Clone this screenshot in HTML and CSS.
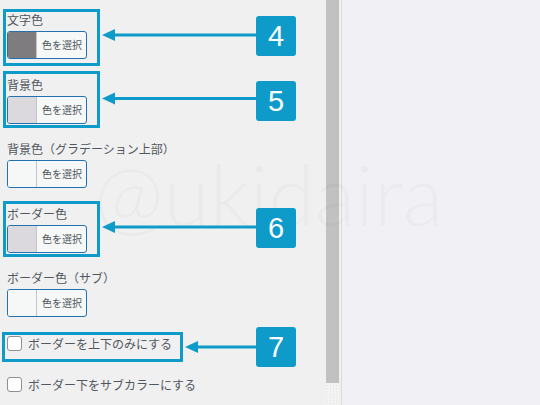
FILE: index.html
```html
<!DOCTYPE html>
<html lang="ja">
<head>
    <meta charset="UTF-8">
    <meta name="viewport" content="width=device-width, initial-scale=1.0">
    <title>ボタン設定</title>
    <link rel="stylesheet" href="styles.css">
</head>
<body>
    <div class="screen">
        <div class="panel">
            <div class="field">
                <div class="field-label">文字色</div>
                <button class="color-btn"><span class="swatch swatch-grey"></span><span class="btn-text">色を選択</span></button>
            </div>
            <div class="field">
                <div class="field-label">背景色</div>
                <button class="color-btn"><span class="swatch swatch-mauve"></span><span class="btn-text">色を選択</span></button>
            </div>
            <div class="field">
                <div class="field-label">背景色（グラデーション上部）</div>
                <button class="color-btn"><span class="swatch"></span><span class="btn-text">色を選択</span></button>
            </div>
            <div class="field">
                <div class="field-label">ボーダー色</div>
                <button class="color-btn"><span class="swatch swatch-mauve"></span><span class="btn-text">色を選択</span></button>
            </div>
            <div class="field">
                <div class="field-label">ボーダー色（サブ）</div>
                <button class="color-btn"><span class="swatch"></span><span class="btn-text">色を選択</span></button>
            </div>

            <div class="check-list">
                <label class="check-row"><span class="check"></span>ボーダーを上下のみにする</label>
                <label class="check-row"><span class="check"></span>ボーダー下をサブカラーにする</label>
            </div>
        </div>

        <div class="scrollbar"><div class="thumb"></div></div>
        <div class="gutter"></div>
        <div class="preview"></div>

        <div class="watermark">@ukidaira</div>

        <!-- рамки и стрелки поверх панели -->
        <svg class="marks" width="540" height="405" viewBox="0 0 540 405">
            <g fill="none" stroke="#0e9bca" stroke-width="3">
                <rect x="4.5" y="10.5" width="94" height="54"/>
                <rect x="4.5" y="72.5" width="94" height="54"/>
                <rect x="4.5" y="202.5" width="94" height="53"/>
                <rect x="3.5" y="333.5" width="178" height="27"/>
                <line x1="112" y1="35" x2="257" y2="35"/>
                <line x1="112" y1="98.5" x2="257" y2="98.5"/>
                <line x1="112" y1="227" x2="257" y2="227"/>
                <line x1="195" y1="347" x2="257" y2="347"/>
            </g>
            <g fill="#0e9bca">
                <polygon points="102,35 115,29 115,41"/>
                <polygon points="102,98.5 115,92.5 115,104.5"/>
                <polygon points="102,227 115,221 115,233"/>
                <polygon points="185,347 198,341 198,353"/>
            </g>
        </svg>

        <div class="badge badge-4">4</div>
        <div class="badge badge-5">5</div>
        <div class="badge badge-6">6</div>
        <div class="badge badge-7">7</div>
    </div>
</body>
</html>
```

FILE: styles.css
```css
body {
    margin: 0;
    font-family: "Noto Sans CJK JP", "Liberation Sans", sans-serif;
    color: #50575e;
}
.screen {
    position: relative;
    width: 540px;
    height: 405px;
    overflow: hidden;
    display: flex;
}

/* левая панель с настройками */
.panel {
    width: 326px;
    flex-shrink: 0;
    background-color: #f0f0f1;
    padding: 11px 0 0 7px;
    box-sizing: border-box;
}
.field {
    margin-bottom: 16.5px;
}
.field-label {
    font-size: 12px;
    line-height: 18px;
    margin-bottom: 2px;
    white-space: nowrap;
}
.color-btn {
    display: flex;
    align-items: stretch;
    width: 80px;
    height: 28px;
    padding: 0;
    border: 1px solid #2271b1;
    border-radius: 3px;
    background-color: #f6f7f7;
    overflow: hidden;
    font-family: inherit;
    cursor: pointer;
}
.swatch {
    width: 28px;
    flex-shrink: 0;
    border-right: 1px solid #c3c4c7;
    background-color: #f6f7f7;
}
.swatch-grey {
    background-color: #7f7c7f;
}
.swatch-mauve {
    background-color: #dcd9de;
}
.btn-text {
    font-size: 10px;
    line-height: 26px;
    color: #50575e;
    padding-left: 5px;
    white-space: nowrap;
}

.check-list {
    margin-top: 3px;
    display: flex;
    flex-direction: column;
    gap: 21px;
}
.check-row {
    display: flex;
    align-items: center;
    height: 20px;
    font-size: 12px;
    white-space: nowrap;
}
.check {
    width: 15px;
    height: 15px;
    box-sizing: border-box;
    border: 1px solid #8c8f94;
    border-radius: 3px;
    background-color: #fff;
    margin-right: 6px;
}

/* полоса прокрутки и правая часть */
.scrollbar {
    width: 13px;
    flex-shrink: 0;
    background-color: #f3f3f3;
    background-image: radial-gradient(#e4e4e4 0.6px, transparent 0.8px);
    background-size: 3px 3px;
}
.thumb {
    height: 383px;
    background-color: #c1c1c1;
}
.gutter {
    width: 2px;
    flex-shrink: 0;
    background-color: #f0f0f1;
    border-right: 1px solid #dcdcde;
}
.preview {
    flex: 1;
    background-color: #f1f0f5;
}

.watermark {
    position: absolute;
    left: 94px;
    top: 140px;
    font-family: Lato, "Open Sans", sans-serif;
    font-weight: 300;
    font-size: 84px;
    line-height: 108px;
    color: rgba(0, 0, 0, 0.025);
    pointer-events: none;
}

.marks {
    position: absolute;
    top: 0;
    left: 0;
}
.badge {
    position: absolute;
    left: 256px;
    width: 40px;
    height: 40px;
    border-radius: 3px;
    background-color: #0e9bca;
    color: #fff;
    font-family: "Liberation Sans", Arial, sans-serif;
    font-size: 29px;
    line-height: 40px;
    text-align: center;
}
.badge-4 { top: 16px; }
.badge-5 { top: 81px; }
.badge-6 { top: 208px; }
.badge-7 { top: 327px; }
```
